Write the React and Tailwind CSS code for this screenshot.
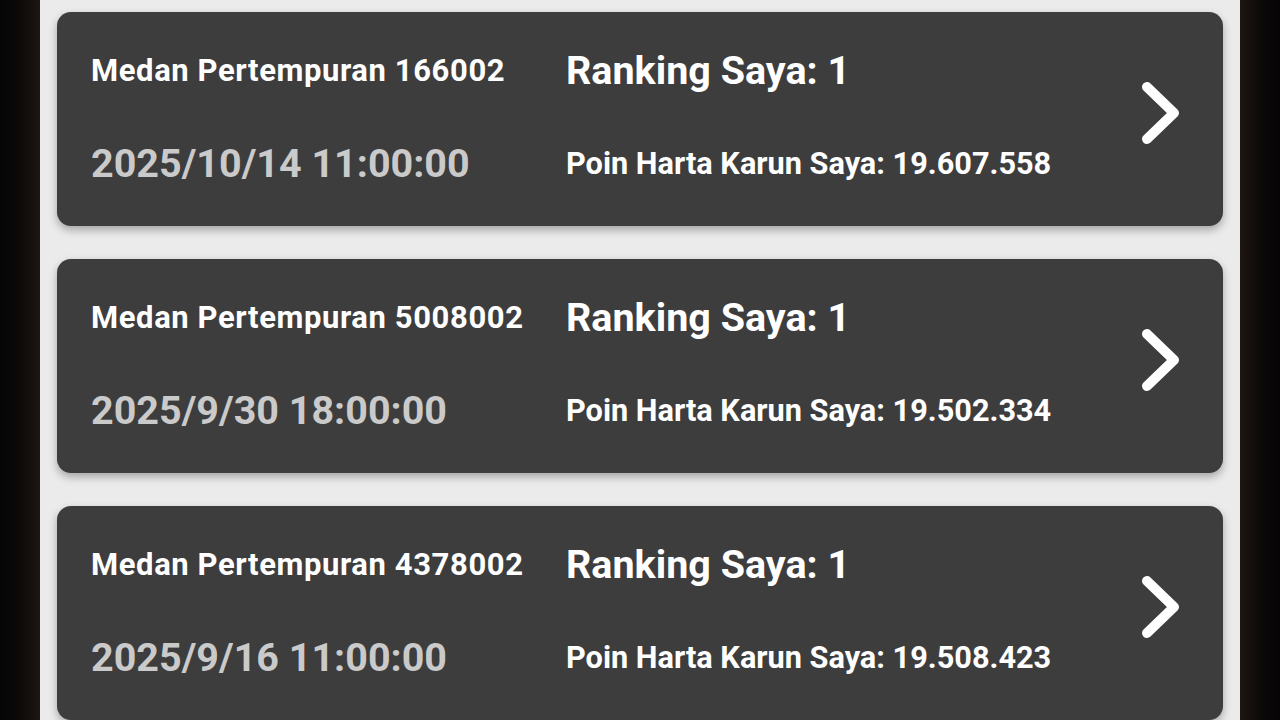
const records = [
  { field: 'Medan Pertempuran 166002', date: '2025/10/14 11:00:00', rank: 1, points: '19.607.558' },
  { field: 'Medan Pertempuran 5008002', date: '2025/9/30 18:00:00', rank: 1, points: '19.502.334' },
  { field: 'Medan Pertempuran 4378002', date: '2025/9/16 11:00:00', rank: 1, points: '19.508.423' },
];

function Chevron() {
  return (
    <svg viewBox="0 0 42 64" className="w-[42px] h-[64px]" fill="none">
      <path d="M7 6 L34 32 L7 58" stroke="white" strokeWidth="10" strokeLinecap="round" strokeLinejoin="round" />
    </svg>
  );
}

function RecordCard({ record }) {
  return (
    <div className="h-[214px] shrink-0 rounded-[14px] bg-[#3d3d3d] shadow-[0_4px_8px_rgba(0,0,0,0.3)] flex items-center pl-[34px] pr-[41px]">
      <div className="flex flex-col w-[475px] gap-[53px] pb-[4px]">
        <div className="text-[31px] leading-[40px] tracking-[0.6px] font-bold text-white">{record.field}</div>
        <div className="text-[39.5px] leading-[40px] font-bold text-[#cacaca]">{record.date}</div>
      </div>
      <div className="flex flex-col flex-1 gap-[53px] pb-[4px]">
        <div className="text-[39.5px] leading-[40px] font-bold text-white">Ranking Saya: {record.rank}</div>
        <div className="text-[30.7px] leading-[40px] font-bold text-white">Poin Harta Karun Saya: {record.points}</div>
      </div>
      <div className="pb-[12px]">
        <Chevron />
      </div>
    </div>
  );
}

export default function App() {
  return (
    <div className="w-[1280px] h-[720px] overflow-hidden flex bg-black" style={{ fontFamily: 'Roboto, "Noto Sans", sans-serif' }}>
      <div className="w-[40px] shrink-0 bg-gradient-to-r from-[#050505] via-[#0d0a09] to-[#1e1612]" />
      <div className="flex-1 bg-[#ebebeb] flex flex-col gap-[33px] pt-[12px] px-[17px]">
        {records.map((r) => (
          <RecordCard key={r.field} record={r} />
        ))}
      </div>
      <div className="w-[40px] shrink-0 bg-gradient-to-r from-[#1e1612] via-[#0d0a09] to-[#050505]" />
    </div>
  );
}
